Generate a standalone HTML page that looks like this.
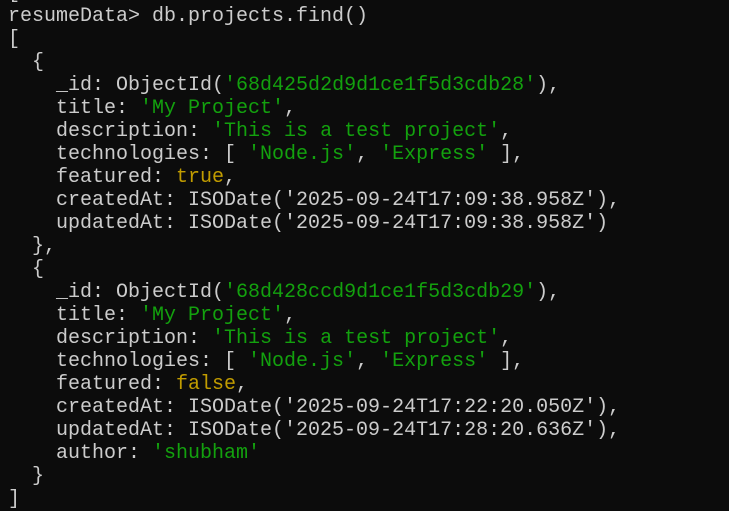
<!DOCTYPE html>
<html><head><style>
html,body{margin:0;padding:0;background:#0c0c0c;width:729px;height:511px;overflow:hidden}
pre{margin:0;position:absolute;left:8px;top:-18px;font-family:"Liberation Mono",monospace;font-size:20px;line-height:23px;color:#cccccc}
.g{color:#13a10e}.y{color:#c19c00}
</style></head><body><pre>[
resumeData&gt; db.projects.find()
[
  {
    _id: ObjectId(<span class="g">'68d425d2d9d1ce1f5d3cdb28'</span>),
    title: <span class="g">'My Project'</span>,
    description: <span class="g">'This is a test project'</span>,
    technologies: [ <span class="g">'Node.js'</span>, <span class="g">'Express'</span> ],
    featured: <span class="y">true</span>,
    createdAt: ISODate('2025-09-24T17:09:38.958Z'),
    updatedAt: ISODate('2025-09-24T17:09:38.958Z')
  },
  {
    _id: ObjectId(<span class="g">'68d428ccd9d1ce1f5d3cdb29'</span>),
    title: <span class="g">'My Project'</span>,
    description: <span class="g">'This is a test project'</span>,
    technologies: [ <span class="g">'Node.js'</span>, <span class="g">'Express'</span> ],
    featured: <span class="y">false</span>,
    createdAt: ISODate('2025-09-24T17:22:20.050Z'),
    updatedAt: ISODate('2025-09-24T17:28:20.636Z'),
    author: <span class="g">'shubham'</span>
  }
]
</pre></body></html>
